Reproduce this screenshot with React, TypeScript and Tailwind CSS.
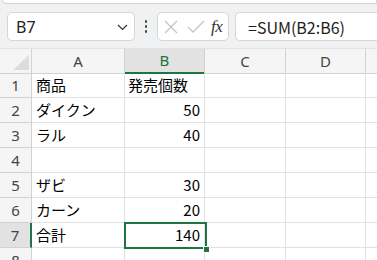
import React from "react";

const rows: { n: number; a: string; b: string }[] = [
  { n: 1, a: "商品", b: "発売個数" },
  { n: 2, a: "ダイクン", b: "50" },
  { n: 3, a: "ラル", b: "40" },
  { n: 4, a: "", b: "" },
  { n: 5, a: "ザビ", b: "30" },
  { n: 6, a: "カーン", b: "20" },
  { n: 7, a: "合計", b: "140" },
  { n: 8, a: "", b: "" },
];

const ui = { fontFamily: '"Noto Sans", "Noto Sans CJK JP", sans-serif' };
const cell = { fontFamily: '"Noto Sans CJK JP", "Noto Sans", sans-serif' };

export default function App() {
  return (
    <div className="w-[377px] h-[260px] overflow-hidden bg-[#f0f1f3] flex flex-col" style={ui}>
      {/* ribbon bottom edge */}
      <div className="h-[4px] ml-[2px] bg-white border border-t-0 border-[#d4d4d4] rounded-bl-[6px] shrink-0" />

      {/* formula bar */}
      <div className="flex items-center h-[29px] mt-[8px] shrink-0">
        <div className="ml-[7px] w-[128px] h-[29px] bg-white border border-[#d6d6d6] rounded-[5px] flex items-center pl-[8px] pr-[6px] justify-between">
          <span className="text-[16px] text-[#222] leading-none">B7</span>
          <svg width="11" height="7" viewBox="0 0 11 7" className="mt-[1px]">
            <path d="M1 1 L5.5 5.5 L10 1" fill="none" stroke="#333" strokeWidth="1.2" />
          </svg>
        </div>
        <div className="w-[22px] flex flex-col items-center justify-center gap-[2.5px]">
          <div className="w-[2.5px] h-[2.5px] bg-[#444] rounded-full" />
          <div className="w-[2.5px] h-[2.5px] bg-[#444] rounded-full" />
          <div className="w-[2.5px] h-[2.5px] bg-[#444] rounded-full" />
        </div>
        <div className="w-[72px] h-[29px] bg-white border border-[#d6d6d6] rounded-[5px] flex items-center pl-[4px]">
          <svg width="16" height="16" viewBox="0 0 16 16" className="ml-[1px]">
            <path d="M2 2 L14 14 M14 2 L2 14" stroke="#c4c4c4" strokeWidth="1.3" fill="none" />
          </svg>
          <svg width="18" height="16" viewBox="0 0 18 16" className="ml-[8px]">
            <path d="M1 8 L6 13 L17 2" stroke="#c4c4c4" strokeWidth="1.3" fill="none" />
          </svg>
          <span
            className="ml-[6px] text-[17px] italic text-[#333] leading-none tracking-[-0.5px]"
            style={{ fontFamily: '"Liberation Serif", "DejaVu Serif", serif' }}
          >
            fx
          </span>
        </div>
        <div className="ml-[6px] flex-1 h-[29px] bg-white border border-r-0 border-[#d6d6d6] rounded-l-[5px] flex items-center pl-[12px]">
          <span className="text-[16px] text-[#222] leading-none" style={cell}>
            =SUM(B2:B6)
          </span>
        </div>
      </div>

      {/* grid */}
      <div className="mt-[7px] relative bg-white">
        {/* header row */}
        <div className="grid grid-cols-[32px_93px_80px_81px_80px_80px] h-[25px] bg-[#f5f5f5] border-t border-[#e3e3e3]">
          <div className="relative border-r border-b border-[#d2d2d2] overflow-hidden">
            <svg width="32" height="24" viewBox="0 0 32 24" className="absolute left-0 top-0">
              <path d="M29 6 L29 21 L13 21 Z" fill="#dcdcdc" />
            </svg>
          </div>
          <div className="border-r border-b border-[#d2d2d2] flex items-center justify-center text-[15px] text-[#444]">A</div>
          <div className="border-r border-[#d2d2d2] border-b-2 border-b-[#217346] bg-[#e2e2e2] flex items-center justify-center text-[15px] text-[#217346]">B</div>
          <div className="border-r border-b border-[#d2d2d2] flex items-center justify-center text-[15px] text-[#444]">C</div>
          <div className="border-r border-b border-[#d2d2d2] flex items-center justify-center text-[15px] text-[#444]">D</div>
          <div className="border-r border-b border-[#d2d2d2]" />
        </div>

        {rows.map((r) => {
          const sel = r.n === 7;
          return (
            <div key={r.n} className="grid grid-cols-[32px_93px_80px_81px_80px_80px] h-[25px]">
              <div
                className={
                  sel
                    ? "bg-[#e2e2e2] border-r-2 border-r-[#217346] border-b border-b-[#d2d2d2] flex items-center justify-center text-[15px] text-[#444]"
                    : "bg-[#f5f5f5] border-r border-b border-[#d2d2d2] flex items-center justify-center text-[15px] text-[#444]"
                }
              >
                {r.n}
              </div>
              <div className="border-r border-b border-[#e1e1e1] flex items-center pl-[4px] pt-[1px] text-[15px] text-black whitespace-nowrap" style={cell}>
                {r.a}
              </div>
              <div
                className={
                  r.n === 1
                    ? "border-r border-b border-[#e1e1e1] flex items-center pl-[3px] pt-[1px] text-[15px] text-black whitespace-nowrap"
                    : "border-r border-b border-[#e1e1e1] flex items-center justify-end pr-[4px] pt-[1px] text-[15px] text-black whitespace-nowrap"
                }
                style={cell}
              >
                {r.b}
              </div>
              <div className="border-r border-b border-[#e1e1e1]" />
              <div className="border-r border-b border-[#e1e1e1]" />
              <div className="border-r border-b border-[#e1e1e1]" />
            </div>
          );
        })}

        {/* selection of B7 */}
        <div className="absolute left-[124px] top-[174px] w-[83px] h-[27px] border-2 border-[#217346] pointer-events-none" />
        <div className="absolute left-[203px] top-[198px] w-[5px] h-[5px] bg-[#217346] border border-white box-content pointer-events-none" />
      </div>
    </div>
  );
}
